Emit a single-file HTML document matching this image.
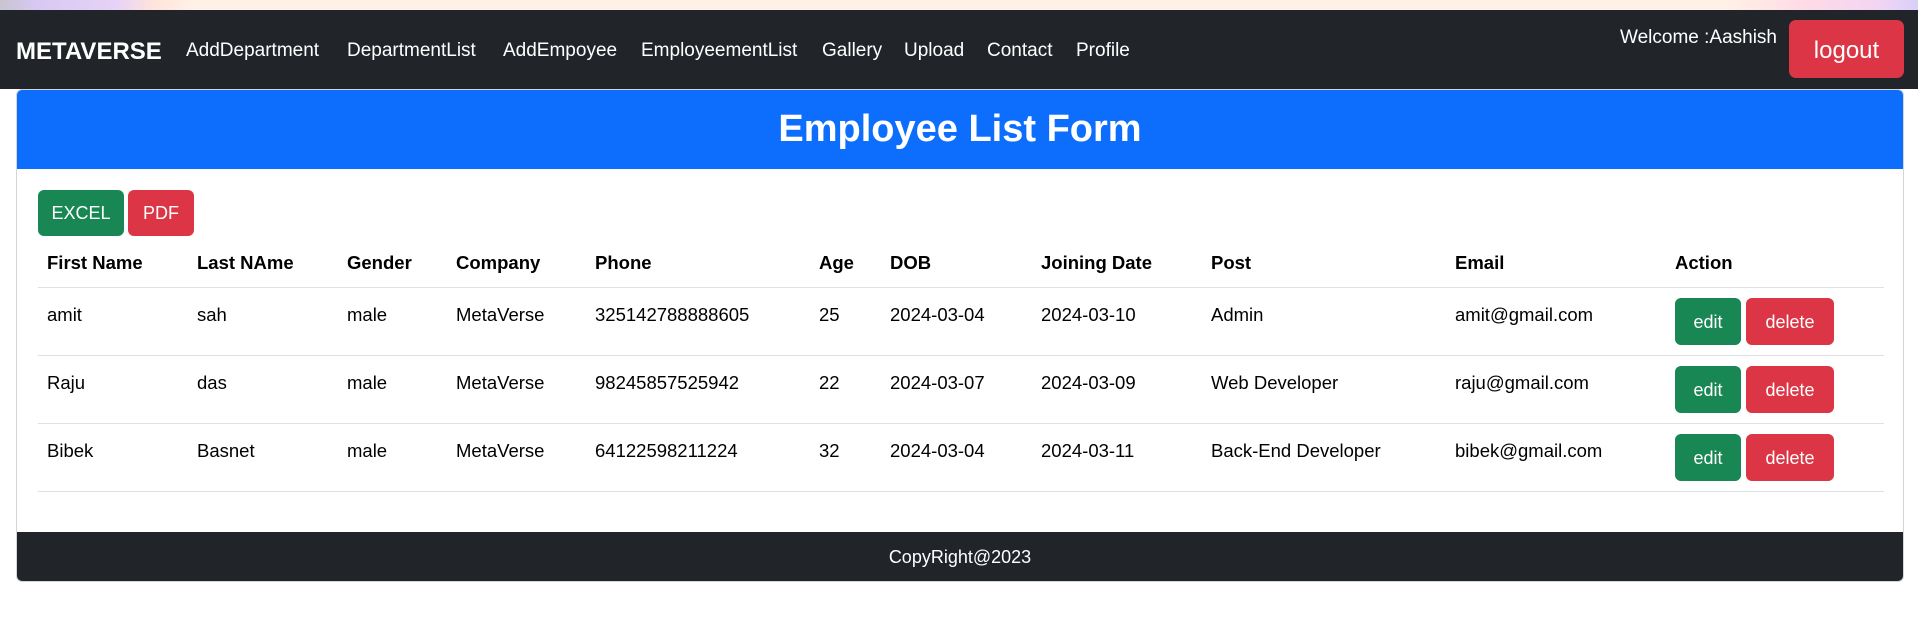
<!DOCTYPE html>
<html><head><meta charset="utf-8"><style>
*{box-sizing:border-box;margin:0;padding:0}
body{width:1918px;height:631px;background:#fff;font-family:"Liberation Sans",sans-serif;position:relative;overflow:hidden;color:#000}
.strip{position:absolute;left:0;top:0;width:1918px;height:10px;background:linear-gradient(90deg,#c8c4d0 0,#d8c8f4 2%,#e6d2f6 6%,#ffe4dc 8%,#fff1e6 10%,#fff1e6 90%,#ffdbe6 94%,#f2d4f4 98%,#d8d0fa 100%)}
.nav{position:absolute;left:0;top:10px;width:1918px;height:79px;background:#212529;color:#fff}
.nav span{position:absolute;top:30px;font-size:19px;white-space:nowrap}
.brand{font-weight:bold;font-size:24px!important;top:28px!important}
.logout{position:absolute;left:1789px;top:10px;width:115px;height:58px;background:#dc3545;border-radius:7px;color:#fff;font-size:24px;text-align:center;line-height:62px}
.card{position:absolute;left:16px;top:89px;width:1888px;height:493px;border:1px solid #d5d5d5;border-radius:6px;overflow:hidden}
.head{position:absolute;left:0;top:0;width:100%;height:79px;background:#0d6efd;color:#fff;font-weight:bold;font-size:38px;text-align:center;line-height:79px}
.btn{position:absolute;color:#fff;border-radius:6px;text-align:center;font-size:18px}
.g{background:#198754}.r{background:#dc3545}
.t{position:absolute;font-size:18.5px;white-space:nowrap}
.b{font-weight:bold}
.line{position:absolute;left:21px;width:1846px;height:1px;background:#dee2e6}
.foot{position:absolute;left:0;top:442px;width:100%;height:51px;background:#212529;color:#fff;text-align:center;line-height:51px;font-size:18px}
</style></head><body>
<div class="strip"></div>
<div class="nav">
<span class="brand" style="left:16px">METAVERSE</span>
<span style="left:186px">AddDepartment</span>
<span style="left:347px">DepartmentList</span>
<span style="left:503px">AddEmpoyee</span>
<span style="left:641px">EmployeementList</span>
<span style="left:822px">Gallery</span>
<span style="left:904px">Upload</span>
<span style="left:987px">Contact</span>
<span style="left:1076px">Profile</span>
<span style="left:1620px;top:17px">Welcome :Aashish</span>
<div class="logout">logout</div>
</div>
<div class="card">
<div class="head">Employee List Form</div>
<div class="btn g" style="left:21px;top:100px;width:86px;height:46px;line-height:46px">EXCEL</div>
<div class="btn r" style="left:111px;top:100px;width:66px;height:46px;line-height:46px">PDF</div>
<div class="t b" style="left:30px;top:162px">First Name</div>
<div class="t b" style="left:180px;top:162px">Last NAme</div>
<div class="t b" style="left:330px;top:162px">Gender</div>
<div class="t b" style="left:439px;top:162px">Company</div>
<div class="t b" style="left:578px;top:162px">Phone</div>
<div class="t b" style="left:802px;top:162px">Age</div>
<div class="t b" style="left:873px;top:162px">DOB</div>
<div class="t b" style="left:1024px;top:162px">Joining Date</div>
<div class="t b" style="left:1194px;top:162px">Post</div>
<div class="t b" style="left:1438px;top:162px">Email</div>
<div class="t b" style="left:1658px;top:162px">Action</div>
<div class="line" style="top:197px"></div>

<div class="t" style="left:30px;top:214px">amit</div>
<div class="t" style="left:180px;top:214px">sah</div>
<div class="t" style="left:330px;top:214px">male</div>
<div class="t" style="left:439px;top:214px">MetaVerse</div>
<div class="t" style="left:578px;top:214px">325142788888605</div>
<div class="t" style="left:802px;top:214px">25</div>
<div class="t" style="left:873px;top:214px">2024-03-04</div>
<div class="t" style="left:1024px;top:214px">2024-03-10</div>
<div class="t" style="left:1194px;top:214px">Admin</div>
<div class="t" style="left:1438px;top:214px">amit@gmail.com</div>
<div class="btn g" style="left:1658px;top:208px;width:66px;height:47px;line-height:49px">edit</div>
<div class="btn r" style="left:1729px;top:208px;width:88px;height:47px;line-height:49px">delete</div>
<div class="line" style="top:265px"></div>

<div class="t" style="left:30px;top:282px">Raju</div>
<div class="t" style="left:180px;top:282px">das</div>
<div class="t" style="left:330px;top:282px">male</div>
<div class="t" style="left:439px;top:282px">MetaVerse</div>
<div class="t" style="left:578px;top:282px">98245857525942</div>
<div class="t" style="left:802px;top:282px">22</div>
<div class="t" style="left:873px;top:282px">2024-03-07</div>
<div class="t" style="left:1024px;top:282px">2024-03-09</div>
<div class="t" style="left:1194px;top:282px">Web Developer</div>
<div class="t" style="left:1438px;top:282px">raju@gmail.com</div>
<div class="btn g" style="left:1658px;top:276px;width:66px;height:47px;line-height:49px">edit</div>
<div class="btn r" style="left:1729px;top:276px;width:88px;height:47px;line-height:49px">delete</div>
<div class="line" style="top:333px"></div>

<div class="t" style="left:30px;top:350px">Bibek</div>
<div class="t" style="left:180px;top:350px">Basnet</div>
<div class="t" style="left:330px;top:350px">male</div>
<div class="t" style="left:439px;top:350px">MetaVerse</div>
<div class="t" style="left:578px;top:350px">64122598211224</div>
<div class="t" style="left:802px;top:350px">32</div>
<div class="t" style="left:873px;top:350px">2024-03-04</div>
<div class="t" style="left:1024px;top:350px">2024-03-11</div>
<div class="t" style="left:1194px;top:350px">Back-End Developer</div>
<div class="t" style="left:1438px;top:350px">bibek@gmail.com</div>
<div class="btn g" style="left:1658px;top:344px;width:66px;height:47px;line-height:49px">edit</div>
<div class="btn r" style="left:1729px;top:344px;width:88px;height:47px;line-height:49px">delete</div>
<div class="line" style="top:401px"></div>

<div class="foot">CopyRight@2023</div>
</div>
</body></html>
